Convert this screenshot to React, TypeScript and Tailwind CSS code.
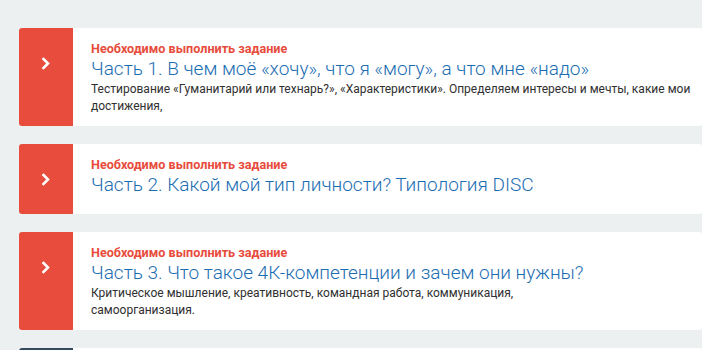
import React from "react";

interface Task {
  id: number;
  title: string;
  lines?: string[];
}

const tasks: Task[] = [
  {
    id: 1,
    title: "Часть 1. В чем моё «хочу», что я «могу», а что мне «надо»",
    lines: [
      "Тестирование «Гуманитарий или технарь?», «Характеристики». Определяем интересы и мечты, какие мои",
      "достижения,",
    ],
  },
  {
    id: 2,
    title: "Часть 2. Какой мой тип личности? Типология DISC",
  },
  {
    id: 3,
    title: "Часть 3. Что такое 4К-компетенции и зачем они нужны?",
    lines: [
      "Критическое мышление, креативность, командная работа, коммуникация,",
      "самоорганизация.",
    ],
  },
];

function Chevron() {
  return (
    <svg width="10" height="13" viewBox="0 0 10 13" fill="none">
      <path
        d="M2.5 2l4.5 4.5-4.5 4.5"
        stroke="#fff"
        strokeWidth="2.6"
        strokeLinecap="square"
        strokeLinejoin="miter"
      />
    </svg>
  );
}

function TaskCard({ task }: { task: Task }) {
  return (
    <div className="flex overflow-hidden rounded-[3px] bg-white">
      <div className="flex w-[54px] shrink-0 justify-center bg-[#e74c3c] pt-[29px]">
        <Chevron />
      </div>
      <div
        className={
          task.lines
            ? "min-w-0 flex-1 pb-[11px] pl-[18px] pt-[13px]"
            : "min-w-0 flex-1 pb-[17px] pl-[18px] pt-[13px]"
        }
      >
        <p className="text-[12.6px] font-bold leading-[16px] text-[#e74c3c]">
          Необходимо выполнить задание
        </p>
        <h3 className="whitespace-nowrap text-[19px] font-light leading-[24px] text-[#1b6db2]">
          {task.title}
        </h3>
        {task.lines && (
          <p className="whitespace-nowrap text-[12px] leading-[17px] text-[#2f2f2f]">
            {task.lines.map((line, i) => (
              <React.Fragment key={i}>
                {i > 0 && <br />}
                {line}
              </React.Fragment>
            ))}
          </p>
        )}
      </div>
    </div>
  );
}

export default function App() {
  return (
    <div
      className="h-[350px] overflow-hidden bg-[#ecf0f1] pl-[19px] pt-[28px]"
      style={{ fontFamily: "Roboto, 'Liberation Sans', sans-serif" }}
    >
      <div className="flex flex-col gap-[18px]">
        {tasks.map((task) => (
          <TaskCard key={task.id} task={task} />
        ))}
        <div className="flex h-[60px] overflow-hidden rounded-[3px] bg-white">
          <div className="w-[54px] shrink-0 bg-[#34495e]" />
        </div>
      </div>
    </div>
  );
}
